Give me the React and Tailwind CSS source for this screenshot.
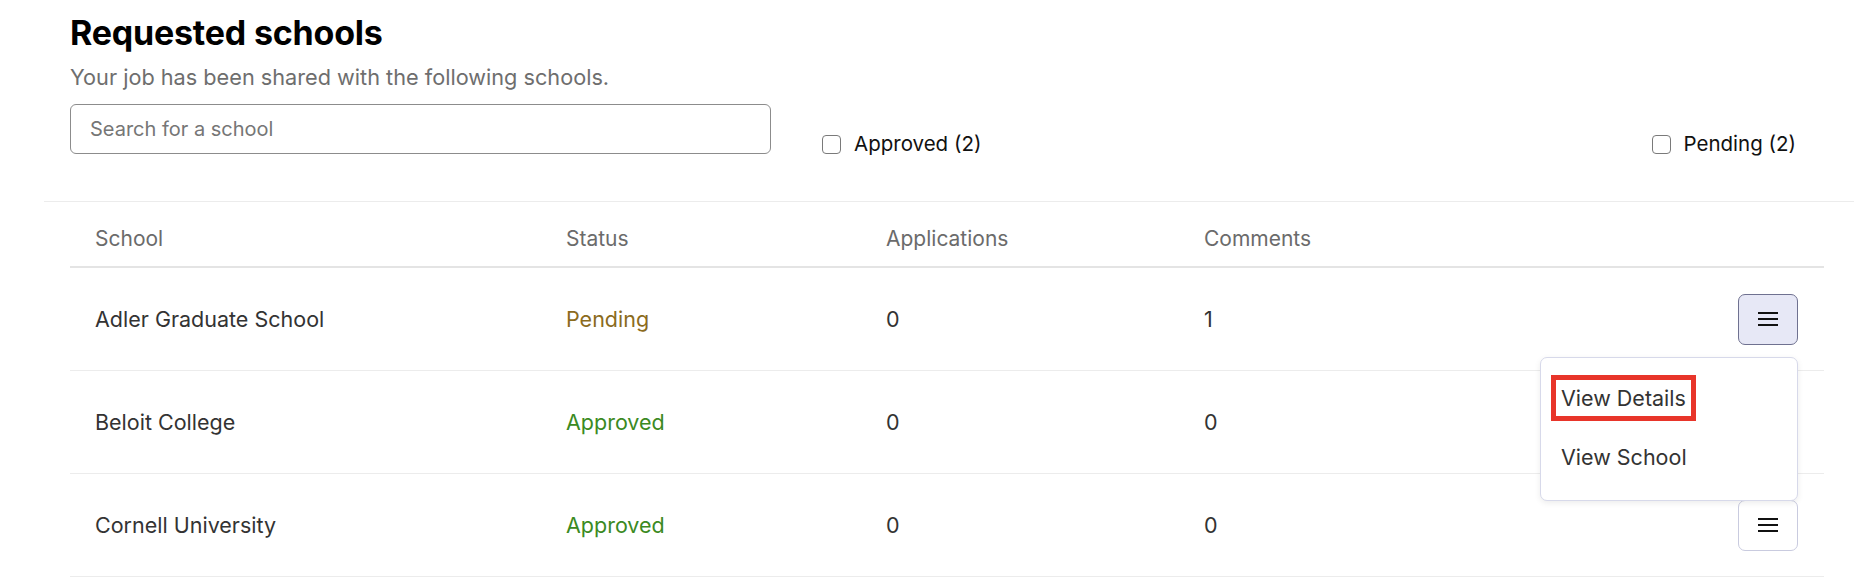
import React, { useState } from 'react';

const schools = [
  { name: 'Adler Graduate School', status: 'Pending', applications: 0, comments: 1 },
  { name: 'Beloit College', status: 'Approved', applications: 0, comments: 0 },
  { name: 'Cornell University', status: 'Approved', applications: 0, comments: 0 },
];

const Hamburger = () => (
  <svg width="20" height="16" viewBox="0 0 20 16" fill="none">
    <rect x="0" y="1" width="20" height="2" fill="#111" />
    <rect x="0" y="7" width="20" height="2" fill="#111" />
    <rect x="0" y="13" width="20" height="2" fill="#111" />
  </svg>
);

const FilterCheck = ({ label }) => (
  <label className="flex items-center gap-[13px] text-[20.5px] text-[#111]">
    <span className="w-[19px] h-[19px] rounded-[4px] border-[1.5px] border-[#7a7a7a] bg-white" />
    <span>{label}</span>
  </label>
);

export default function App() {
  const [openRow] = useState(0);

  return (
    <div className="w-full h-[588px] bg-white overflow-hidden font-['Inter',sans-serif] relative">
      <div className="pl-[70px] pt-[11px]">
        <h1 className="text-[34px] leading-[44px] font-bold text-black tracking-[-0.2px]">Requested schools</h1>
        <p className="mt-[9px] text-[21.7px] leading-[26px] text-[#6e6e6e]">
          Your job has been shared with the following schools.
        </p>
      </div>

      <div className="flex items-start pl-[70px] pr-[58px] mt-[14px] h-[97px]">
        <input
          type="text"
          placeholder="Search for a school"
          className="w-[701px] h-[50px] rounded-[6px] border border-[#8c8c8c] px-[19px] text-[20px] text-[#333] placeholder:text-[#767676] outline-none"
        />
        <div className="ml-[51px] mt-[25px]">
          <FilterCheck label="Approved (2)" />
        </div>
        <div className="ml-auto mt-[25px]">
          <FilterCheck label="Pending (2)" />
        </div>
      </div>

      <div className="ml-[44px] border-t border-[#ececec]" />

      <div className="ml-[70px] mr-[30px] relative">
        <div className="grid grid-cols-[471px_320px_318px_1fr] h-[66px] items-end pb-[14px] border-b-2 border-[#e4e4e4] text-[21px] leading-[26px] text-[#6b6b6b]">
          <div className="px-[25px]">School</div>
          <div className="px-[25px]">Status</div>
          <div className="px-[25px]">Applications</div>
          <div className="px-[25px]">Comments</div>
        </div>

        {schools.map((s, i) => (
          <div
            key={s.name}
            className="grid grid-cols-[471px_320px_318px_1fr_auto] h-[103px] items-center border-b border-[#ececec] text-[21.5px] text-[#333]"
          >
            <div className="px-[25px]">{s.name}</div>
            <div className={`px-[25px] ${s.status === 'Pending' ? 'text-[#8b6b1d]' : 'text-[#3b8a22]'}`}>{s.status}</div>
            <div className="px-[25px]">{s.applications}</div>
            <div className="px-[25px]">{s.comments}</div>
            <div className="flex justify-end pr-[26px]">
              <button
                className={`w-[60px] h-[51px] rounded-[7px] border flex items-center justify-center ${
                  openRow === i ? 'bg-[#e7e8f6] border-[#6f7190]' : 'bg-white border-[#c9cbdf]'
                }`}
              >
                <Hamburger />
              </button>
            </div>
          </div>
        ))}

        {/* dropdown for first row */}
        <div className="absolute left-[1470px] top-[155px] w-[258px] h-[144px] bg-white rounded-[7px] border border-[#d7d9ea] shadow-[0_2px_6px_rgba(0,0,0,0.08)] pt-[17px] pl-[10px]">
          <div className="inline-block border-[5px] border-[#e8352a] px-[5px] py-[2px] text-[21.5px] leading-[32px] text-[#333]">
            View Details
          </div>
          <div className="mt-[20px] pl-[10px] text-[21.5px] leading-[32px] text-[#333]">View School</div>
        </div>
      </div>
    </div>
  );
}
